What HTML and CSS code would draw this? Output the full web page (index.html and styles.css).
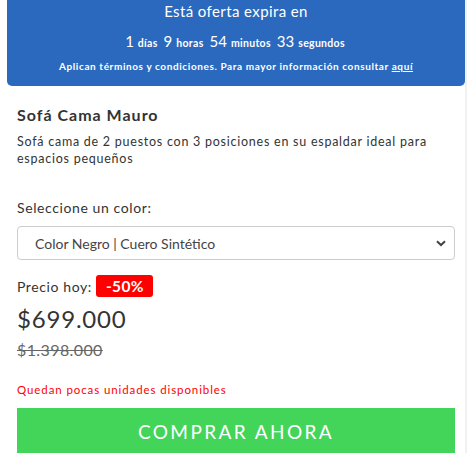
FILE: index.html
```html
<!DOCTYPE html>
<html lang="es">
<head>
<meta charset="utf-8">
<link rel="stylesheet" href="styles.css">
</head>
<body>
<div class="page">
  <div class="banner">
    <div class="banner-title">Está oferta expira en</div>
    <div class="countdown">
      <span class="num">1</span> <span class="unit">días</span>
      <span class="num">9</span> <span class="unit">horas</span>
      <span class="num">54</span> <span class="unit">minutos</span>
      <span class="num">33</span> <span class="unit">segundos</span>
    </div>
    <div class="terms">Aplican términos y condiciones. Para mayor información consultar <a href="#">aquí</a></div>
  </div>
  <div class="product">
    <h1 class="title">Sofá Cama Mauro</h1>
    <p class="desc">Sofá cama de 2 puestos con 3 posiciones en su espaldar ideal para espacios pequeños</p>
    <label class="select-label">Seleccione un color:</label>
    <div class="select-box">
      <span class="select-text">Color Negro | Cuero Sintético</span>
      <svg class="chev" width="10" height="7" viewBox="0 0 10 7"><path d="M1 1.2 L5 5 L9 1.2" fill="none" stroke="#444" stroke-width="2"/></svg>
    </div>
    <div class="price-row">
      <span class="price-label">Precio hoy:</span>
      <span class="badge">-50%</span>
    </div>
    <div class="price">$699.000</div>
    <div class="old-price">$1.398.000</div>
    <div class="stock">Quedan pocas unidades disponibles</div>
    <button class="buy">COMPRAR AHORA</button>
  </div>
</div>
</body>
</html>
```
FILE: styles.css
```css
html, body {
  margin: 0;
  padding: 0;
  background: #f1f1f1;
}
body {
  font-family: Lato, "Liberation Sans", sans-serif;
  color: #333;
}
.page {
  width: 465px;
  height: 453px;
  background: #fff;
  overflow: hidden;
}
.banner {
  margin-left: 7px;
  width: 458px;
  height: 86px;
  box-sizing: border-box;
  background: #2a69bd;
  border-radius: 0 0 5px 5px;
  color: #fff;
  text-align: center;
  padding-top: 2px;
}
.banner-title {
  font-size: 15px;
  letter-spacing: 0.4px;
  line-height: 18px;
}
.countdown {
  margin-top: 12px;
  line-height: 18px;
  font-weight: 600;
}
.countdown .num {
  font-size: 15px;
  font-weight: 400;
}
.countdown .unit {
  font-size: 10.5px;
  font-weight: 700;
  letter-spacing: 0.3px;
  margin-right: 2px;
}
.terms {
  margin-top: 8px;
  font-size: 10px;
  font-weight: 700;
  letter-spacing: 0.6px;
  line-height: 12px;
}
.terms a {
  color: #fff;
}
.product {
  padding: 0 10px 0 17px;
}
.title {
  margin: 19px 0 0;
  font-size: 16px;
  font-weight: 700;
  letter-spacing: 1px;
  line-height: 20px;
  color: #333;
}
.desc {
  margin: 9px 0 0;
  font-size: 12.5px;
  letter-spacing: 0.75px;
  line-height: 16.5px;
  color: #333;
}
.select-label {
  display: block;
  margin-top: 32px;
  font-size: 14px;
  letter-spacing: 0.6px;
  line-height: 18px;
  color: #333;
}
.select-box {
  margin-top: 9px;
  height: 34px;
  box-sizing: border-box;
  border: 1px solid #ccc;
  border-radius: 4px;
  display: flex;
  align-items: center;
  justify-content: space-between;
  padding: 0 8px 0 17px;
}
.select-text {
  font-size: 14px;
  color: #444;
}
.price-row {
  margin-top: 15px;
  display: flex;
  align-items: center;
  gap: 4px;
  height: 22px;
}
.price-label {
  font-size: 14px;
  letter-spacing: 0.6px;
}
.badge {
  background: #fe0000;
  color: #fff;
  font-weight: 700;
  font-size: 15.5px;
  border-radius: 3px;
  padding: 0 9px 0 10px;
  line-height: 22px;
  letter-spacing: 0.4px;
}
.price {
  margin-top: 7px;
  font-size: 24px;
  letter-spacing: 0.8px;
  line-height: 30px;
  color: #333;
}
.old-price {
  margin-top: 6px;
  font-size: 16px;
  color: #666;
  text-decoration: line-through;
  letter-spacing: 0.4px;
  line-height: 20px;
}
.stock {
  margin-top: 22px;
  font-size: 11.5px;
  letter-spacing: 0.9px;
  color: #f00;
  line-height: 15px;
}
.buy {
  display: block;
  margin-top: 11px;
  width: 100%;
  height: 46px;
  border: 0;
  background: #43d55a;
  color: #fff;
  font-family: Lato, "Liberation Sans", sans-serif;
  font-size: 19px;
  letter-spacing: 2.4px;
  padding: 0;
}
```
